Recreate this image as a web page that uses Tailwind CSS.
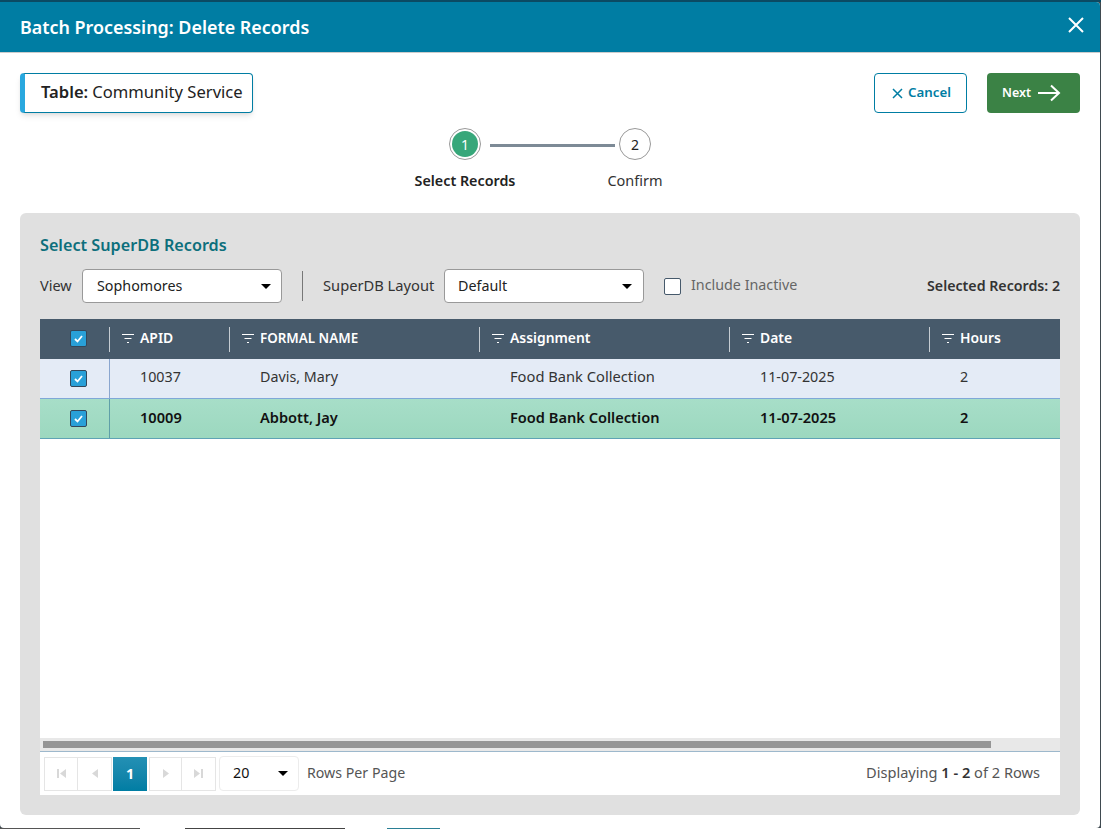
<!DOCTYPE html>
<html lang="en">
<head>
    <meta charset="UTF-8">
    <title>Batch Processing: Delete Records</title>
    <script src="https://cdn.jsdelivr.net/npm/@tailwindcss/browser@4"></script>
</head>
<body class="w-[1101px] h-[829px] overflow-hidden bg-[#3f4a50] font-['Noto_Sans',sans-serif] text-[14.3px] text-[#333] flex flex-col">
    <div class="h-[2px] shrink-0 bg-[#0b4a63]"></div>
    <div class="h-[826px] shrink-0 mr-[1px] bg-white rounded-b-[4px] rounded-tr-[4px] flex flex-col">
        <!-- header -->
        <div class="h-[51px] shrink-0 bg-[#007da3] border-b border-[#ccc] rounded-tr-[4px] flex items-center justify-between pl-[20px] pr-[14px]">
            <h1 class="text-[17.9px] font-semibold text-white">Batch Processing: Delete Records</h1>
            <svg class="w-[20px] h-[20px] mb-[5px]" viewBox="0 0 20 20" fill="none" stroke="white" stroke-width="2"><path d="M3 3l14 14M17 3L3 17"/></svg>
        </div>

        <div class="flex-1 px-[20px] flex flex-col">
            <!-- top row -->
            <div class="flex items-start justify-between pt-[20px] h-[60px] shrink-0">
                <div class="h-[40px] w-[233px] bg-white border border-[#007da3] border-l-[5px] border-l-[#29a8df] rounded-[4px] shadow-md flex items-center pl-[16px] pb-[2px] text-[16.6px] text-[#222]">
                    <b class="font-semibold mr-[4px]">Table:</b> Community Service
                </div>
                <div class="flex gap-[20px]">
                    <button class="h-[40px] w-[93px] border border-[#007da3] rounded-[4px] bg-white text-[#007da3] text-[13.3px] font-semibold flex items-center pl-[17px] gap-[5px]">
                        <svg class="w-[11px] h-[11px]" viewBox="0 0 11 11" fill="none" stroke="#007da3" stroke-width="1.5"><path d="M1 1l9 9M10 1l-9 9"/></svg>
                        Cancel
                    </button>
                    <button class="h-[40px] w-[93px] rounded-[4px] bg-[#3b8245] text-white text-[12.5px] font-semibold flex items-center pl-[15px] gap-[6px]">
                        Next
                        <svg class="w-[24px] h-[18px]" viewBox="0 0 24 18" fill="none" stroke="white" stroke-width="2"><path d="M1 9h21M14 1.5L22 9l-8 7.5"/></svg>
                    </button>
                </div>
            </div>

            <!-- stepper -->
            <div class="h-[100px] shrink-0 pt-[15px] flex justify-center">
                <div class="flex flex-col items-center w-[120px]">
                    <div class="w-[32px] h-[32px] rounded-full border border-[#999] bg-white flex items-center justify-center">
                        <div class="w-[26px] h-[26px] rounded-full bg-[#37a77a] text-white text-[14px] flex items-center justify-center">1</div>
                    </div>
                    <div class="mt-[10px] text-[14.3px] font-semibold text-[#222]">Select Records</div>
                </div>
                <div class="w-[125px] h-[3px] bg-[#7d8a96] mt-[16px] ml-[-35px] mr-[-40px] relative"></div>
                <div class="flex flex-col items-center w-[120px]">
                    <div class="w-[32px] h-[32px] rounded-full border border-[#999] bg-white text-[#222] text-[14px] flex items-center justify-center">2</div>
                    <div class="mt-[10px] text-[14.5px] text-[#333]">Confirm</div>
                </div>
            </div>

            <!-- panel -->
            <div class="h-[602px] shrink-0 bg-[#e0e0e0] rounded-[6px] px-[20px] pt-[20px] pb-[20px] flex flex-col">
                <h2 class="text-[16.2px] font-semibold text-[#0d6f7c] leading-[24px]">Select SuperDB Records</h2>
                <div class="flex items-center h-[34px] mt-[12px] text-[#333]">
                    <span class="w-[42px] text-[14.5px] pb-[1px]">View</span>
                    <div class="w-[200px] h-[34px] bg-white border border-[#999] rounded-[4px] flex items-center justify-between pl-[14px] pr-[10px] text-[#222]">
                        <span class="pb-[1px]">Sophomores</span>
                        <span class="w-0 h-0 border-x-[5px] border-x-transparent border-t-[5px] border-t-black"></span>
                    </div>
                    <div class="ml-[20px] w-px h-[30px] bg-[#777]"></div>
                    <span class="ml-[20px] w-[121px] text-[14.7px] pb-[1px]">SuperDB Layout</span>
                    <div class="w-[200px] h-[34px] bg-white border border-[#999] rounded-[4px] flex items-center justify-between pl-[13px] pr-[11px] text-[#222]">
                        <span class="pb-[1px]">Default</span>
                        <span class="w-0 h-0 border-x-[5px] border-x-transparent border-t-[5px] border-t-black"></span>
                    </div>
                    <div class="ml-[20px] w-[17px] h-[17px] bg-white border border-[#46596b] rounded-[2px]"></div>
                    <span class="ml-[10px] text-[#666] pb-[2px]">Include Inactive</span>
                    <span class="ml-auto font-semibold text-[#333] text-[14.2px] pb-[1px]">Selected Records: 2</span>
                </div>

                <!-- grid -->
                <div class="mt-[16px] flex-1 bg-white flex flex-col">
                    <div class="h-[40px] shrink-0 bg-[#475a6b] text-white font-semibold text-[13.9px] grid grid-cols-[69px_120px_250px_250px_200px_131px] items-center">
                        <div class="flex justify-center pl-[7px] pb-[1px]">
                            <span class="w-[17px] h-[17px] bg-[#29a0d8] border border-[#33475a] rounded-[2px] flex items-center justify-center">
                                <svg class="w-[11px] h-[11px]" viewBox="0 0 11 11" fill="none" stroke="white" stroke-width="1.8"><path d="M2 6l2.5 2.5L9 3"/></svg>
                            </span>
                        </div>
                        <div class="h-[25px] border-l border-[#c5ccd2] flex items-center pl-[12px] pb-[1px] gap-[6px]">
                            <svg class="w-[12px] h-[11px]" viewBox="0 0 12 11" fill="none" stroke="white"><path d="M0 1.5h12M2.5 5.5h7M5 9.5h2"/></svg>APID
                        </div>
                        <div class="h-[25px] border-l border-[#c5ccd2] flex items-center pl-[12px] pb-[1px] gap-[6px]">
                            <svg class="w-[12px] h-[11px]" viewBox="0 0 12 11" fill="none" stroke="white"><path d="M0 1.5h12M2.5 5.5h7M5 9.5h2"/></svg><span class="text-[13.4px]">FORMAL NAME</span>
                        </div>
                        <div class="h-[25px] border-l border-[#c5ccd2] flex items-center pl-[12px] pb-[1px] gap-[6px]">
                            <svg class="w-[12px] h-[11px]" viewBox="0 0 12 11" fill="none" stroke="white"><path d="M0 1.5h12M2.5 5.5h7M5 9.5h2"/></svg>Assignment
                        </div>
                        <div class="h-[25px] border-l border-[#c5ccd2] flex items-center pl-[12px] pb-[1px] gap-[6px]">
                            <svg class="w-[12px] h-[11px]" viewBox="0 0 12 11" fill="none" stroke="white"><path d="M0 1.5h12M2.5 5.5h7M5 9.5h2"/></svg>Date
                        </div>
                        <div class="h-[25px] border-l border-[#c5ccd2] flex items-center pl-[12px] pb-[1px] gap-[6px]">
                            <svg class="w-[12px] h-[11px]" viewBox="0 0 12 11" fill="none" stroke="white"><path d="M0 1.5h12M2.5 5.5h7M5 9.5h2"/></svg>Hours
                        </div>
                    </div>
                    <div class="h-[40px] shrink-0 bg-[#e4ebf6] border-b border-[#7fa8d8] text-[#333] grid grid-cols-[70px_120px_250px_250px_200px_130px] items-center">
                        <div class="h-full border-r border-[#8aa6cf] flex items-center justify-center pl-[7px]">
                            <span class="w-[17px] h-[17px] bg-[#29a0d8] border border-[#33475a] rounded-[2px] flex items-center justify-center">
                                <svg class="w-[11px] h-[11px]" viewBox="0 0 11 11" fill="none" stroke="white" stroke-width="1.8"><path d="M2 6l2.5 2.5L9 3"/></svg>
                            </span>
                        </div>
                        <div class="pl-[30px] pb-[4px]">10037</div>
                        <div class="pl-[30px] pb-[4px]">Davis, Mary</div>
                        <div class="pl-[30px] pb-[4px] text-[14.7px]">Food Bank Collection</div>
                        <div class="pl-[30px] pb-[4px]">11-07-2025</div>
                        <div class="pl-[30px] pb-[4px]">2</div>
                    </div>
                    <div class="h-[40px] shrink-0 bg-gradient-to-b from-[#a7dec8] to-[#9cd8bf] border-b border-[#5fa3b5] text-[#111] font-semibold text-[14.6px] grid grid-cols-[70px_120px_250px_250px_200px_130px] items-center">
                        <div class="h-full border-r border-[#5f9fa8] flex items-center justify-center pl-[7px]">
                            <span class="w-[17px] h-[17px] bg-[#29a0d8] border border-[#33475a] rounded-[2px] flex items-center justify-center">
                                <svg class="w-[11px] h-[11px]" viewBox="0 0 11 11" fill="none" stroke="white" stroke-width="1.8"><path d="M2 6l2.5 2.5L9 3"/></svg>
                            </span>
                        </div>
                        <div class="pl-[30px] pb-[2px]">10009</div>
                        <div class="pl-[30px] pb-[2px]">Abbott, Jay</div>
                        <div class="pl-[30px] pb-[2px]">Food Bank Collection</div>
                        <div class="pl-[30px] pb-[2px]">11-07-2025</div>
                        <div class="pl-[30px] pb-[2px]">2</div>
                    </div>
                    <div class="flex-1"></div>
                    <!-- scrollbar -->
                    <div class="h-[13px] shrink-0 bg-[#e8e8e8] pt-[3px] pl-[3px]">
                        <div class="w-[948px] h-[7px] bg-[#959595]"></div>
                    </div>
                    <!-- pager -->
                    <div class="h-[44px] shrink-0 border-t border-[#9db8cc] bg-white flex items-center pl-[4px] pr-[20px]">
                        <div class="h-[34px] flex items-center">
                            <div class="w-[34px] h-[34px] border border-[#e5e5e5] flex items-center justify-center">
                                <svg class="w-[9px] h-[9px]" viewBox="0 0 9 9" fill="#d8d8d8"><path d="M0 0h2v9H0zM9 0v9L3 4.5z"/></svg>
                            </div>
                            <div class="w-[34px] h-[34px] border border-l-0 border-[#e5e5e5] flex items-center justify-center">
                                <svg class="w-[8px] h-[9px]" viewBox="0 0 8 9" fill="#d8d8d8"><path d="M7 0v9L1 4.5z"/></svg>
                            </div>
                            <div class="w-[34px] h-[34px] ml-px bg-gradient-to-b from-[#2390b4] to-[#007da3] text-white font-bold flex items-center justify-center">1</div>
                            <div class="w-[33px] h-[34px] ml-[2px] border border-[#e5e5e5] flex items-center justify-center">
                                <svg class="w-[8px] h-[9px]" viewBox="0 0 8 9" fill="#d8d8d8"><path d="M1 0v9l6-4.5z"/></svg>
                            </div>
                            <div class="w-[34px] h-[34px] border border-l-0 border-[#e5e5e5] flex items-center justify-center">
                                <svg class="w-[9px] h-[9px]" viewBox="0 0 9 9" fill="#d8d8d8"><path d="M0 0v9l6-4.5zM7 0h2v9H7z"/></svg>
                            </div>
                        </div>
                        <div class="ml-[3px] w-[80px] h-[35px] border border-[#ececec] rounded-[4px] flex items-center justify-between pl-[13px] pr-[10px] text-[#111]">
                            <span class="pb-[2px]">20</span>
                            <span class="w-0 h-0 border-x-[5px] border-x-transparent border-t-[5px] border-t-black"></span>
                        </div>
                        <span class="ml-[8px] pb-[2px] text-[#555] text-[14.2px]">Rows Per Page</span>
                        <span class="ml-auto pb-[2px] text-[#555] text-[14.6px]">Displaying <b class="font-semibold text-[#333]">1 - 2</b> of 2 Rows</span>
                    </div>
                </div>
            </div>
        </div>
    </div>
    <!-- sliver of the page behind the dialog -->
    <div class="h-[1px] shrink-0 flex">
        <div class="w-[140px] bg-[#555]"></div>
        <div class="w-[45px] bg-white"></div>
        <div class="w-[160px] bg-[#444]"></div>
        <div class="w-[42px] bg-white"></div>
        <div class="w-[53px] bg-[#2a7f95]"></div>
        <div class="flex-1 bg-white"></div>
    </div>
</body>
</html>
